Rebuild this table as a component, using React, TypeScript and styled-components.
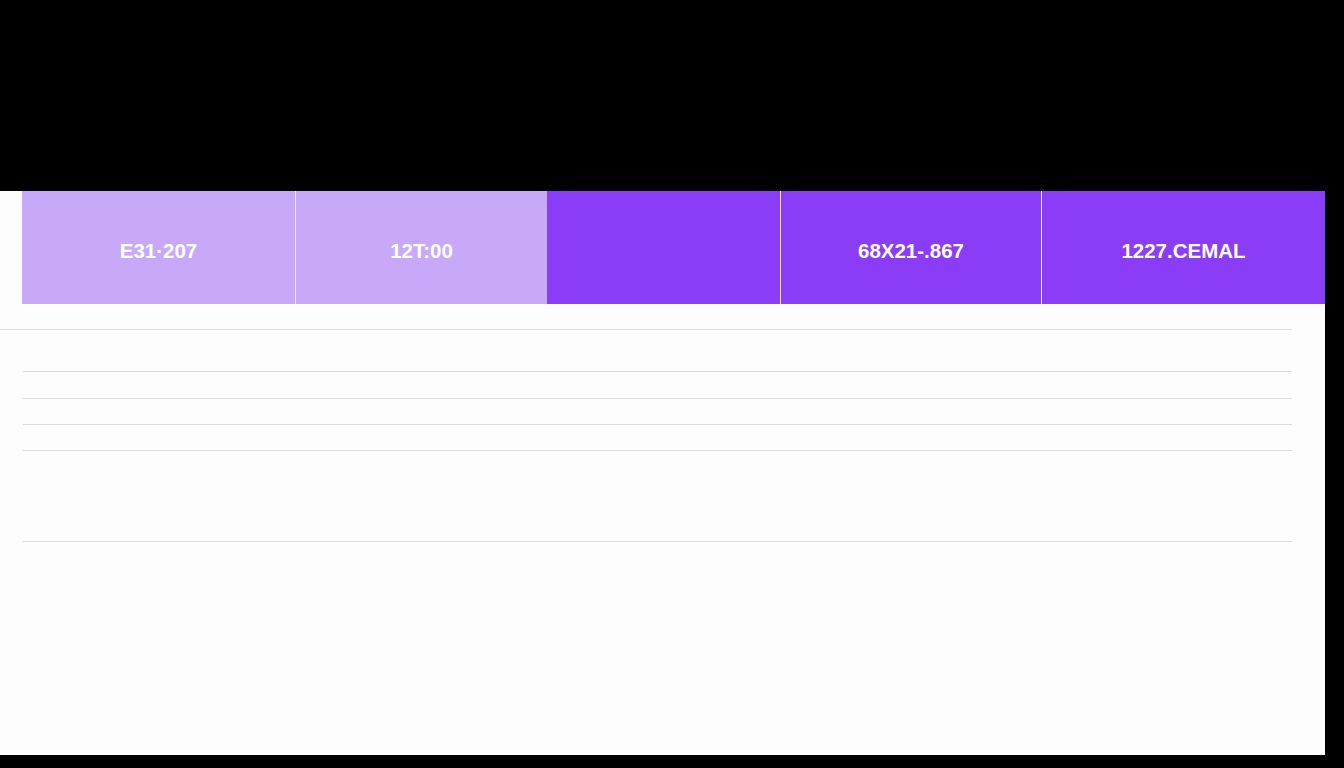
import styled, { createGlobalStyle } from "styled-components";

const GlobalStyle = createGlobalStyle`
  html, body {
    margin: 0;
    padding: 0;
    background: #000;
    font-family: "Liberation Sans", Arial, sans-serif;
  }
`;

const Screen = styled.div`
  width: 1344px;
  height: 768px;
  background: #000;
  overflow: hidden;
  padding-top: 191px;
  box-sizing: border-box;
`;

const Panel = styled.div`
  width: 1325px;
  height: 564px;
  background: #fdfdfd;
  display: flex;
  flex-direction: column;
`;

const HeaderBar = styled.div`
  display: flex;
  height: 113px;
  margin-left: 22px;
`;

const HeaderCell = styled.div<{ $w: string; $strong?: boolean; $sep?: boolean }>`
  flex: ${(p) => (p.$w === "auto" ? "1" : `0 0 ${p.$w}`)};
  display: flex;
  align-items: center;
  justify-content: center;
  padding-top: 7px;
  box-sizing: content-box;
  background: ${(p) => (p.$strong ? "#8a3cf7" : "#c8a9f9")};
  border-left: ${(p) => (p.$sep ? "1px solid #f1eafd" : "none")};
  color: #fff;
  font-size: 20.5px;
  font-weight: 700;
`;

const Spacer = styled.div`
  height: 25px;
`;

const Row = styled.div<{ $h: number; $full?: boolean }>`
  height: ${(p) => p.$h}px;
  margin-left: ${(p) => (p.$full ? "0" : "23px")};
  width: ${(p) => (p.$full ? "1292px" : "1269px")};
  border-bottom: 1px solid #dcdcde;
  box-sizing: border-box;
`;

const cells = [
  { w: "273px", text: "E31·207" },
  { w: "251px", text: "12T:00", sep: true },
  { w: "233px", text: "", strong: true },
  { w: "260px", text: "68X21-.867", strong: true, sep: true },
  { w: "auto", text: "1227.CEMAL", strong: true, sep: true },
];

const rows = [
  { h: 42 },
  { h: 27 },
  { h: 26 },
  { h: 26 },
  { h: 91 },
];

function App() {
  return (
    <>
      <GlobalStyle />
      <Screen>
        <Panel>
          <HeaderBar>
            {cells.map((c, i) => (
              <HeaderCell key={i} $w={c.w} $strong={c.strong} $sep={c.sep}>
                {c.text}
              </HeaderCell>
            ))}
          </HeaderBar>
          <Spacer />
          <Row $h={1} $full />
          {rows.map((r, i) => (
            <Row key={i} $h={r.h} />
          ))}
        </Panel>
      </Screen>
    </>
  );
}

export default App;
